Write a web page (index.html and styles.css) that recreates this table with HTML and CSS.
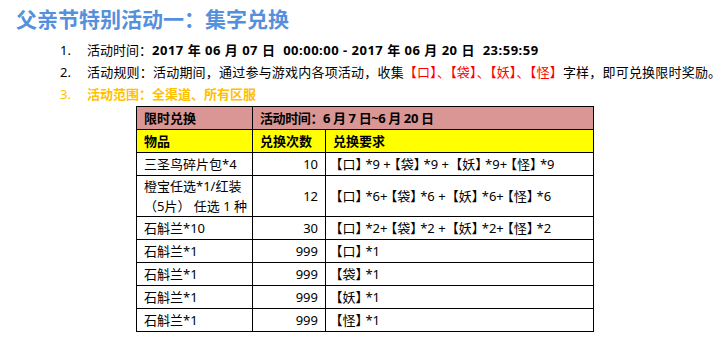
FILE: index.html
```html
<!DOCTYPE html>
<html lang="zh-CN">
<head>
<meta charset="utf-8">
<title>父亲节特别活动一：集字兑换</title>
<link rel="stylesheet" href="styles.css">
</head>
<body>
<h1 class="title">父亲节特别活动一：集字兑换</h1>
<ol class="rules">
  <li><span class="num">1.</span><span class="txt">活动时间<span class="colon">：</span><b class="date">2017 年 06 月 07 日&nbsp; 00:00:00 - 2017 年 06 月 20 日&nbsp; 23:59:59</b></span></li>
  <li><span class="num">2.</span><span class="txt wide">活动规则<span class="colon">：</span>活动期间<span class="colon">，</span>通过参与游戏内各项活动<span class="colon">，</span>收集<span class="red">【口】</span><span class="red">、</span><span class="red">【袋】</span><span class="red">、</span><span class="red">【妖】</span><span class="red">、</span><span class="red">【怪】</span>字样<span class="colon">，</span>即可兑换限时奖励。</span></li>
  <li class="orange"><span class="num">3.</span><span class="txt"><b>活动范围<span class="colon">：</span>全渠道、所有区服</b></span></li>
</ol>
<table class="exchange">
  <colgroup><col class="c1"><col class="c2"><col class="c3"></colgroup>
  <tr class="head-pink"><th>限时兑换</th><th colspan="2" class="period">活动时间<span class="colon">：</span>6 月 7 日~6 月 20 日</th></tr>
  <tr class="head-yellow"><th>物品</th><th>兑换次数</th><th>兑换要求</th></tr>
  <tr><td>三圣鸟碎片包*4</td><td class="n">10</td><td class="req">【口】 *9 + 【袋】 *9 +&nbsp; 【妖】 *9+ 【怪】 *9</td></tr>
  <tr class="two"><td>橙宝任选*1/红装<br>（5片） 任选 1 种</td><td class="n">12</td><td class="req">【口】 *6+ 【袋】 *6 +&nbsp; 【妖】 *6+ 【怪】 *6</td></tr>
  <tr><td>石斛兰*10</td><td class="n">30</td><td class="req">【口】 *2+ 【袋】 *2 +&nbsp; 【妖】 *2+ 【怪】 *2</td></tr>
  <tr><td>石斛兰*1</td><td class="n">999</td><td class="req">【口】 *1</td></tr>
  <tr><td>石斛兰*1</td><td class="n">999</td><td class="req">【袋】 *1</td></tr>
  <tr><td>石斛兰*1</td><td class="n">999</td><td class="req">【妖】 *1</td></tr>
  <tr><td>石斛兰*1</td><td class="n">999</td><td class="req">【怪】 *1</td></tr>
</table>
</body>
</html>
```
FILE: styles.css
```css
html, body {
  margin: 0;
  padding: 0;
  background: #fff;
}
body {
  font-family: "Noto Sans", "Noto Sans CJK SC", sans-serif;
  font-size: 13px;
  color: #000;
}
.title {
  margin: 4px 0 0 16px;
  font-size: 21px;
  line-height: 28px;
  font-weight: bold;
  color: #5590dc;
  font-family: "Noto Sans CJK SC", sans-serif;
}
.rules {
  list-style: none;
  margin: 7px 0 0 0;
  padding: 0;
}
.rules li {
  display: flex;
  line-height: 22px;
  height: 22px;
  white-space: nowrap;
}
.rules .num {
  width: 27px;
  margin-left: 60px;
}
.rules b {
  font-weight: bold;
}
.date {
  letter-spacing: 0.5px;
}
.wide {
  letter-spacing: 0.2px;
}
.colon {
  font-family: "Noto Sans CJK TC", sans-serif;
}
.red {
  color: #ff0000;
}
.orange {
  color: #ffc000;
}
.exchange {
  margin: 1px 0 0 136px;
  border-collapse: collapse;
  width: 457px;
  table-layout: fixed;
}
.exchange .c1 { width: 116px; }
.exchange .c2 { width: 73px; }
.exchange .c3 { width: 268px; }
.exchange th, .exchange td {
  border: 1px solid #000;
  padding: 0 7px;
  line-height: 22px;
  text-align: left;
  vertical-align: middle;
  white-space: nowrap;
}
.exchange th {
  font-weight: bold;
}
.exchange th.period {
  letter-spacing: -0.4px;
}
.exchange td.n {
  text-align: right;
}
.exchange td.req {
  font-feature-settings: "halt" 1;
  padding-left: 10px;
}
.head-pink th {
  background: #d99694;
}
.head-yellow th {
  background: #ffff00;
}
.exchange tr.two td {
  line-height: 20px;
}
```
